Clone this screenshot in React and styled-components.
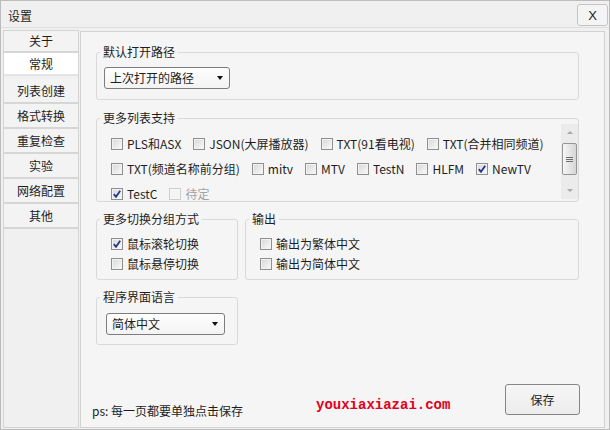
import React from 'react';
import styled, { createGlobalStyle } from 'styled-components';

const GlobalStyle = createGlobalStyle`
  body {
    margin: 0;
    font-family: "Noto Sans CJK SC", "Microsoft YaHei", sans-serif;
    font-size: 12px;
    color: #1e1e1e;
  }
  * { box-sizing: border-box; }
`;

const Window = styled.div`
  width: 610px;
  height: 430px;
  border: 1px solid #bcbcbc;
  background: #f0f0f0;
  display: flex;
  flex-direction: column;
`;

const TitleBar = styled.div`
  height: 27px;
  flex: none;
  display: flex;
  justify-content: space-between;
  align-items: flex-start;
  padding: 3px 1px 0 7px;
  border-bottom: 1px solid #dedede;
`;

const Title = styled.span`
  line-height: 18px;
  margin-top: 3px;
`;

const CloseButton = styled.button`
  width: 31px;
  height: 22px;
  border: 1px solid #c4c4c4;
  border-radius: 3px;
  background: #f4f4f4;
  font-family: "Liberation Sans", Arial, sans-serif;
  font-size: 13px;
  color: #222;
  padding: 0;
`;

const Body = styled.div`
  flex: 1;
  display: flex;
  padding: 2px 4px 1px 2px;
  min-height: 0;
`;

const Sidebar = styled.div`
  width: 76px;
  flex: none;
  border: 1px solid #d4d4d4;
  background: #f0f0f0;
  display: flex;
  flex-direction: column;
`;

const Tab = styled.div`
  height: ${p => p.$height}px;
  margin-bottom: ${p => (p.$active ? 3 : 0)}px;
  display: flex;
  align-items: center;
  justify-content: center;
  background: ${p => (p.$active ? '#ffffff' : '#f3f3f3')};
  border-bottom: 2px solid ${p => (p.$active ? '#e4e4e4' : '#d6d6d6')};
  line-height: 16px;
`;

const Panel = styled.div`
  flex: 1;
  margin: 1px 0 0 1px;
  border: 1px solid #d2d2d2;
  background: #f5f5f5;
  display: flex;
  flex-direction: column;
  padding: 0 25px 0 15px;
`;

const Group = styled.fieldset`
  margin: ${p => p.$top || 0}px 0 0 0;
  padding: 0;
  border: 1px solid #d9d9d9;
  border-radius: 3px;
  min-width: 0;
  width: ${p => (p.$width ? `${p.$width}px` : 'auto')};
  flex: ${p => (p.$grow ? '1' : 'none')};
`;

const Legend = styled.legend`
  margin-left: 3px;
  padding: 0 3px;
  line-height: 16px;
  font-size: 12px;
`;

const GroupBody = styled.div`
  padding: ${p => p.$pad};
`;

const SelectBox = styled.div`
  width: ${p => p.$width}px;
  height: 22px;
  border: 1px solid #7d7d7d;
  border-radius: 3px;
  background: linear-gradient(#fefefe, #f3f3f3);
  display: flex;
  align-items: center;
  justify-content: space-between;
  padding: 0 6px 0 5px;
  line-height: 16px;
`;

const Arrow = styled.span`
  width: 0;
  height: 0;
  border-left: 3.5px solid transparent;
  border-right: 3.5px solid transparent;
  border-top: 4px solid #111;
`;

const GroupRow = styled.div`
  display: flex;
  gap: 7px;
  margin-top: 9px;
`;

const ListArea = styled.div`
  display: flex;
  height: 77px;
  margin-top: -2px;
`;

const ListContent = styled.div`
  flex: 1;
  overflow: hidden;
  padding: 7px 0 0 14px;
`;

const ListRow = styled.div`
  height: 25px;
  display: flex;
  align-items: center;
  gap: 12px;
`;

const StackRow = styled.div`
  height: 20px;
  display: flex;
  align-items: center;
`;

const CheckLabel = styled.label`
  display: flex;
  align-items: center;
  gap: 4px;
  white-space: nowrap;
  line-height: 16px;
  color: ${p => (p.$disabled ? '#a3a3a3' : '#1e1e1e')};
`;

const Box = styled.span`
  width: 12px;
  height: 12px;
  flex: none;
  border: 1px solid ${p => (p.$disabled ? '#cdcdcd' : '#8e8f8f')};
  background: ${p =>
    p.$disabled
      ? '#f4f4f4'
      : 'linear-gradient(135deg, #d6d6d6 0%, #ececec 60%, #fbfbfb 100%)'};
  box-shadow: inset 0 0 0 1px ${p => (p.$disabled ? '#f7f7f7' : '#f2f2f2')};
  display: flex;
  align-items: center;
  justify-content: center;
`;

const ScrollBar = styled.div`
  width: 17px;
  flex: none;
  margin-bottom: 2px;
  background: #ebebeb;
  display: flex;
  flex-direction: column;
  align-items: center;
`;

const ScrollArrow = styled.div`
  height: 17px;
  width: 100%;
  display: flex;
  align-items: center;
  justify-content: center;

  &::after {
    content: '';
    border-left: 3px solid transparent;
    border-right: 3px solid transparent;
    ${p => (p.$up ? 'border-bottom' : 'border-top')}: 3px solid #a8a8a8;
  }
`;

const Thumb = styled.div`
  width: 15px;
  height: 32px;
  margin-top: 2px;
  border: 1px solid #959595;
  border-radius: 2px;
  background: linear-gradient(90deg, #f6f6f6, #e2e2e2 60%, #d6d6d6);
  display: flex;
  flex-direction: column;
  align-items: center;
  justify-content: center;
  gap: 1px;
`;

const Grip = styled.span`
  width: 7px;
  height: 1px;
  background: #6e6e6e;
`;

const Spacer = styled.div`
  flex: 1;
`;

const Footer = styled.div`
  margin: auto -1px 0 -4px;
  display: flex;
  align-items: flex-end;
  padding-bottom: 8px;
`;

const Hint = styled.span`
  width: 224px;
  line-height: 16px;
`;

const Watermark = styled.span`
  font-family: "Liberation Mono", "Courier New", monospace;
  font-weight: bold;
  font-size: 14px;
  line-height: 18px;
  color: #e3001b;
  margin-bottom: 5px;
`;

const SaveButton = styled.button`
  margin: 0 0 4px auto;
  width: 75px;
  height: 31px;
  border: 1px solid #858585;
  border-radius: 3px;
  background: linear-gradient(#f6f6f6, #ececec);
  font-family: "Noto Sans CJK SC", sans-serif;
  font-size: 12px;
  color: #1e1e1e;
  padding: 0;
`;

const tabs = [
  { label: '关于', height: 22 },
  { label: '常规', height: 23, active: true },
  { label: '列表创建', height: 25 },
  { label: '格式转换', height: 25 },
  { label: '重复检查', height: 25 },
  { label: '实验', height: 25 },
  { label: '网络配置', height: 25 },
  { label: '其他', height: 25 },
];

const listRows = [
  [
    { label: 'PLS和ASX' },
    { label: 'JSON(大屏播放器)' },
    { label: 'TXT(91看电视)' },
    { label: 'TXT(合并相同频道)' },
  ],
  [
    { label: 'TXT(频道名称前分组)' },
    { label: 'mitv' },
    { label: 'MTV' },
    { label: 'TestN' },
    { label: 'HLFM' },
    { label: 'NewTV', checked: true },
  ],
  [
    { label: 'TestC', checked: true },
    { label: '待定', disabled: true },
  ],
];

const Check = ({ label, checked, disabled }) => (
  <CheckLabel $disabled={disabled}>
    <Box $disabled={disabled}>
      {checked && (
        <svg width="8" height="8" viewBox="0 0 8 8">
          <path d="M0.8 4.2 L3 6.8 L7.2 0.8" fill="none" stroke="#26358c" strokeWidth="1.8" />
        </svg>
      )}
    </Box>
    {label}
  </CheckLabel>
);

const Select = ({ value, width }) => (
  <SelectBox $width={width}>
    <span>{value}</span>
    <Arrow />
  </SelectBox>
);

export default function App() {
  return (
    <>
      <GlobalStyle />
      <Window>
        <TitleBar>
          <Title>设置</Title>
          <CloseButton>X</CloseButton>
        </TitleBar>
        <Body>
          <Sidebar>
            {tabs.map(t => (
              <Tab key={t.label} $height={t.height} $active={t.active}>
                {t.label}
              </Tab>
            ))}
          </Sidebar>
          <Panel>
            <Group $top={12}>
              <Legend>默认打开路径</Legend>
              <GroupBody $pad="7px 0 10px 7px">
                <Select value="上次打开的路径" width={126} />
              </GroupBody>
            </Group>

            <Group $top={10}>
              <Legend>更多列表支持</Legend>
              <ListArea>
                <ListContent>
                  {listRows.map((row, i) => (
                    <ListRow key={i}>
                      {row.map(item => (
                        <Check key={item.label} {...item} />
                      ))}
                    </ListRow>
                  ))}
                </ListContent>
                <ScrollBar>
                  <ScrollArrow $up />
                  <Thumb>
                    <Grip />
                    <Grip />
                    <Grip />
                  </Thumb>
                  <Spacer />
                  <ScrollArrow />
                </ScrollBar>
              </ListArea>
            </Group>

            <GroupRow>
              <Group $width={142}>
                <Legend>更多切换分组方式</Legend>
                <GroupBody $pad="7px 0 5px 14px">
                  <StackRow><Check label="鼠标滚轮切换" checked /></StackRow>
                  <StackRow><Check label="鼠标悬停切换" /></StackRow>
                </GroupBody>
              </Group>
              <Group $grow>
                <Legend>输出</Legend>
                <GroupBody $pad="7px 0 5px 14px">
                  <StackRow><Check label="输出为繁体中文" /></StackRow>
                  <StackRow><Check label="输出为简体中文" /></StackRow>
                </GroupBody>
              </Group>
            </GroupRow>

            <GroupRow>
              <Group $width={142}>
                <Legend>程序界面语言</Legend>
                <GroupBody $pad="8px 0 9px 9px">
                  <Select value="简体中文" width={119} />
                </GroupBody>
              </Group>
            </GroupRow>

            <Footer>
              <Hint>ps: 每一页都要单独点击保存</Hint>
              <Watermark>youxiaxiazai.com</Watermark>
              <SaveButton>保存</SaveButton>
            </Footer>
          </Panel>
        </Body>
      </Window>
    </>
  );
}
